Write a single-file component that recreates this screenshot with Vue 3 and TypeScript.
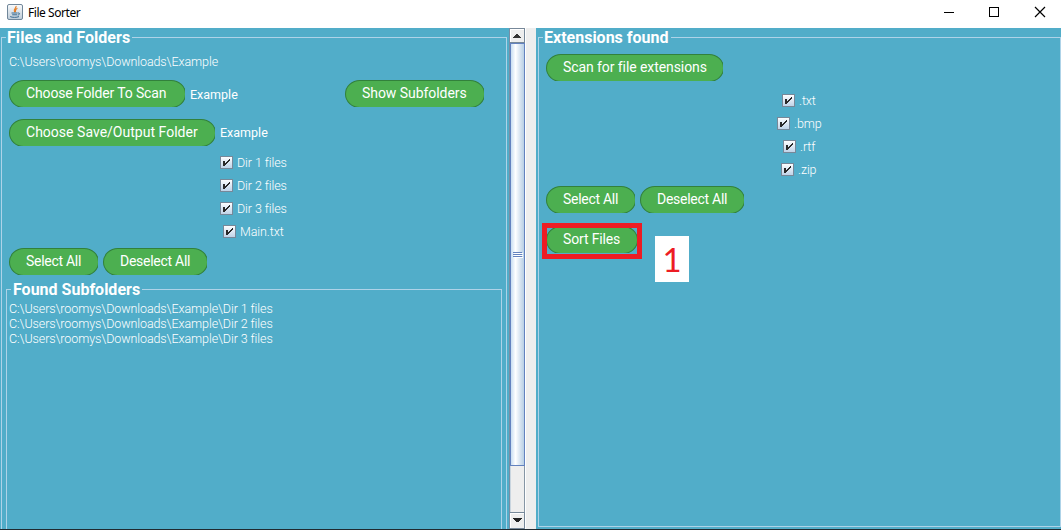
<script setup lang="ts">
const root = 'C:\\Users\\roomys\\Downloads\\Example'
const entries = [
  { name: 'Dir 1 files', x: 220 },
  { name: 'Dir 2 files', x: 220 },
  { name: 'Dir 3 files', x: 220 },
  { name: 'Main.txt', x: 223 },
]
const extensions = [
  { name: '.txt', x: 246 },
  { name: '.bmp', x: 241 },
  { name: '.rtf', x: 247 },
  { name: '.zip', x: 245 },
]
const subfolders = ['Dir 1 files', 'Dir 2 files', 'Dir 3 files']
</script>

<template>
  <div class="window">
    <header class="titlebar">
      <svg class="app-icon" width="16" height="16" viewBox="0 0 16 16">
        <defs>
          <linearGradient id="tile" x1="0" y1="0" x2="0" y2="1">
            <stop offset="0" stop-color="#fafbfc" />
            <stop offset="1" stop-color="#bccbd8" />
          </linearGradient>
        </defs>
        <rect x=".5" y=".5" width="15" height="15" rx="1.5" fill="url(#tile)" stroke="#71879a" />
        <path d="M9 2C10 4 5.5 5 7.6 8.2M10.4 4.3C7.8 5.4 8.8 6.3 8.3 8.2" fill="none" stroke="#e77b20" stroke-width="1.2" />
        <path d="M4.5 9h6.2M5.2 10.8h5M3.2 12.6c2 1 6.5 1 8.8 0M11 9c2.3-.3 2 1.7-.2 2.1" fill="none" stroke="#386a91" stroke-width="1" />
      </svg>
      <span class="app-name">File Sorter</span>
      <svg class="controls" width="131" height="28" viewBox="0 0 131 28" fill="none" stroke="#000" shape-rendering="crispEdges">
        <path d="M14 12.5h10" />
        <rect x="59.5" y="7.5" width="9" height="9" />
        <path d="M105 7l10 10M115 7l-10 10" shape-rendering="auto" stroke-width="1.2" />
      </svg>
    </header>

    <main class="body">
      <section class="left">
        <div class="group files">
          <h2 class="legend w-files">Files and Folders</h2>
          <p class="path root-path">{{ root }}</p>
          <div class="row first">
            <button class="btn b-scan">Choose Folder To Scan</button>
            <span class="value">Example</span>
            <button class="btn b-show">Show Subfolders</button>
          </div>
          <div class="row second">
            <button class="btn b-save">Choose Save/Output Folder</button>
            <span class="value">Example</span>
          </div>
          <div class="checks">
            <label v-for="e in entries" :key="e.name" class="check" :style="{ marginLeft: e.x - 2 + 'px' }">
              <svg width="13" height="13" viewBox="0 0 13 13" shape-rendering="crispEdges">
                <defs>
                  <linearGradient id="box" x1="0" y1="0" x2="0" y2="1">
                    <stop offset="0" stop-color="#fff" />
                    <stop offset="1" stop-color="#bdd1e7" />
                  </linearGradient>
                </defs>
                <rect x=".5" y=".5" width="12" height="12" fill="url(#box)" stroke="#778899" />
                <path d="M3 5h2v2h1v-1h1v-1h1v-1h1v-1h1v2h-1v1h-1v1h-1v1h-1v1h-1v1h-2z" fill="#292929" />
              </svg>
              <span>{{ e.name }}</span>
            </label>
          </div>
          <div class="row pair">
            <button class="btn b-all">Select All</button>
            <button class="btn b-none">Deselect All</button>
          </div>
          <div class="group found">
            <h2 class="legend w-found">Found Subfolders</h2>
            <p v-for="s in subfolders" :key="s" class="path sub">{{ root }}\{{ s }}</p>
          </div>
        </div>
      </section>

      <div class="scrollbar">
        <div class="arrow"><svg width="8" height="4" viewBox="0 0 8 4" shape-rendering="crispEdges"><path d="M3 0h2v1h1v1h1v1h1v1H0v-1h1v-1h1v-1h1z" fill="#333" /></svg></div>
        <div class="thumb"><i></i><i></i><i></i></div>
        <div class="track"></div>
        <div class="arrow down"><svg width="9" height="4" viewBox="0 0 9 4" shape-rendering="crispEdges"><path d="M0 0h9v1h-1v1h-1v1h-1v1h-3v-1h-1v-1h-1v-1h-1z" fill="#222" /></svg></div>
      </div>

      <section class="right">
        <div class="group exts">
          <h2 class="legend w-exts">Extensions found</h2>
          <div class="row scan">
            <button class="btn b-ext">Scan for file extensions</button>
          </div>
          <div class="checks">
            <label v-for="e in extensions" :key="e.name" class="check" :style="{ marginLeft: e.x - 3 + 'px' }">
              <svg width="13" height="13" viewBox="0 0 13 13" shape-rendering="crispEdges">
                <rect x=".5" y=".5" width="12" height="12" fill="url(#box)" stroke="#778899" />
                <path d="M3 5h2v2h1v-1h1v-1h1v-1h1v-1h1v2h-1v1h-1v1h-1v1h-1v1h-1v1h-2z" fill="#292929" />
              </svg>
              <span>{{ e.name }}</span>
            </label>
          </div>
          <div class="row pair">
            <button class="btn b-all">Select All</button>
            <button class="btn b-none">Deselect All</button>
          </div>
          <div class="row sort">
            <div class="sort-wrap">
              <button class="btn b-sort">Sort Files</button>
              <div class="highlight"></div>
            </div>
            <div class="step">1</div>
          </div>
        </div>
      </section>
    </main>
  </div>
</template>

<style>
html, body { margin: 0; overflow: hidden; }
</style>

<style scoped>
* { box-sizing: border-box; }
.window {
  width: 1061px; height: 530px; display: flex; flex-direction: column;
  background: #fff; color: #fff; font-family: Roboto, sans-serif; overflow: hidden;
}
.titlebar { height: 28px; flex: none; display: flex; align-items: center; padding-left: 7px; color: #000; }
.app-icon { margin-top: -4px; flex: none; }
.app-name { margin: -3px 0 0 5px; font: 12px "Noto Sans", sans-serif; letter-spacing: -0.45px; }
.controls { margin-left: auto; flex: none; }
.body { height: 502px; display: flex; background: #eee; border-bottom: 1px solid #202a30; }
.left { width: 509px; padding: 9px 2px 0 1px; background: #51adc9; overflow: hidden; flex: none; }
.right { width: 525px; padding: 9px 0 2px 2px; margin-left: 10px; background: #51adc9; flex: none; }
.group { border: 1px solid #aed3e8; }
.files { height: 520px; width: 506px; }
.exts { height: 490px; width: 523px; }
.found { margin: 13px 4px 0; height: 270px; }
.legend {
  margin: -10px 0 0 4px; height: 20px; width: max-content; padding: 0 2px 0 1px;
  background: #51adc9; font-size: 16px; line-height: 19px; font-weight: 700; white-space: nowrap;
}
.w-files { letter-spacing: 0.06px; }
.w-found { padding-left: 2px; }
.path { margin: 0; height: 15px; font-size: 12.5px; line-height: 15px; font-weight: 300; letter-spacing: -0.09px; white-space: pre; }
.root-path { margin: 6px 0 0 7px; }
.sub { margin-left: 2px; }
.found .legend + .path { margin-top: 1px; }
.row { display: flex; align-items: center; height: 28px; margin-left: 7px; }
.first { margin-top: 11px; }
.second { margin-top: 11px; }
.btn {
  height: 28px; flex: none; padding: 0 0 2px 16px; margin: 0; border: 1px solid #32813b; border-radius: 16px / 15px;
  background: #4caf50; color: #fff; font: 400 14px/24px Roboto, sans-serif;
  clip-path: inset(0 1px 1px 0); white-space: nowrap; text-align: left;
}
.b-scan { width: 177px; letter-spacing: -0.14px; }
.b-save { width: 207px; letter-spacing: 0.02px; }
.b-show { width: 140px; margin-left: auto; margin-right: 21px; letter-spacing: -0.05px; }
.b-all { width: 90px; letter-spacing: -0.28px; }
.b-none { width: 105px; margin-left: 4px; letter-spacing: -0.27px; }
.b-ext { width: 178px; letter-spacing: -0.08px; }
.b-sort { width: 92px; letter-spacing: -0.16px; }
.value { font-size: 12.5px; line-height: 16px; margin-left: 4px; margin-top: 1px; }
.second .value { margin-top: -1px; }
.checks { margin-top: 4px; }
.check { display: flex; align-items: center; height: 23px; font-size: 12.5px; font-weight: 300; letter-spacing: -0.09px; }
.check svg { flex: none; }
.check span { margin-left: 4px; line-height: 15px; }
.pair { margin-top: 5px; }
.scan { margin-top: 6px; }
.scan + .checks { margin-top: 7px; }
.sort { margin-top: 12px; align-items: flex-start; }
.sort-wrap { position: relative; width: 92px; height: 28px; }
.highlight { position: absolute; left: -4px; top: -3px; width: 100px; height: 36px; border: 5px solid #ed1c24; }
.step {
  width: 34px; height: 46px; margin: 10px 0 0 17px; background: #fff; color: #ed1c24;
  font: 33px/47px Lato, sans-serif; text-align: center;
}
.scrollbar { width: 17px; flex: none; display: flex; flex-direction: column; border-left: 1px solid #778ea5; border-right: 1px solid #fff; background: #eee; }
.arrow { height: 15px; flex: none; display: flex; align-items: center; justify-content: center; border: 1px solid #778899; border-left: 0; box-shadow: inset 1px 1px #fff; background: #eee; }
.thumb {
  height: 423px; border: 1px solid #6382bf;
  background: linear-gradient(90deg, #c8ddf2 0, #fff 35%, #e2ebf5 60%, #b8cfe5 100%);
  display: flex; flex-direction: column; align-items: center; justify-content: center; gap: 1px;
}
.thumb i { width: 9px; height: 1px; background: #6382bf; box-shadow: 1px 1px #fff; }
.track { flex: 1; border-right: 1px solid #8696a5; border-left: 1px solid #c9d5df; }
.down { height: 17px; padding-bottom: 2px; }
</style>
